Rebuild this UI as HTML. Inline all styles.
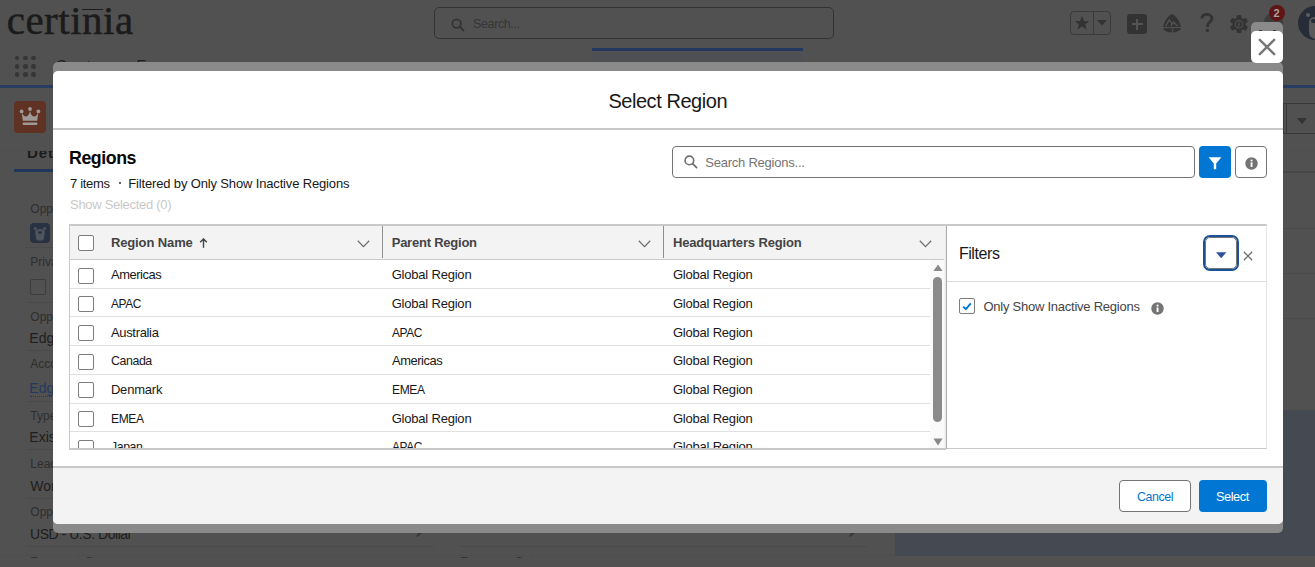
<!DOCTYPE html>
<html><head><meta charset="utf-8"><style>
html,body{margin:0;padding:0;}
body{width:1315px;height:567px;position:relative;overflow:hidden;background:#515151;font-family:"Liberation Sans", sans-serif;}
body div{position:absolute;}
.t{white-space:nowrap;}
</style></head><body>
<div id="logo" class="t" style="left:6.70px;top:0.26px;font-size:41px;line-height:41px;color:#1b1b1b;font-weight:400;letter-spacing:0.511px;font-family:'Liberation Serif', serif;-webkit-text-stroke:0.5px #1b1b1b;">certinia</div>
<div style="left:82px;top:8.5px;width:21px;height:1.2px;background:#1b1b1b"></div>
<div style="left:434px;top:7px;width:399.5px;height:31.5px;border:1px solid #333;border-radius:5px;box-sizing:border-box"></div>
<svg style="position:absolute;left:451px;top:18px" width="14" height="14" viewBox="0 0 14 14"><circle cx="5.6" cy="5.6" r="4.3" fill="none" stroke="#333" stroke-width="1.7"/><line x1="8.7" y1="8.7" x2="12.5" y2="12.5" stroke="#333" stroke-width="1.8" stroke-linecap="round"/></svg>
<div id="hsearch" class="t" style="left:472.60px;top:17.00px;font-size:13px;line-height:13px;color:#363636;font-weight:400;letter-spacing:-0.450px;font-family:'Liberation Sans', sans-serif;transform:scaleX(0.9704);transform-origin:0 0;">Search...</div>
<div style="left:592px;top:48px;width:211px;height:3px;background:#24375c"></div>
<div style="left:592px;top:51px;width:211px;height:11px;background:#4f5053"></div>
<div style="left:1070px;top:11px;width:41px;height:24px;border:1px solid #3a3a3a;border-radius:4px;box-sizing:border-box"></div>
<div style="left:1093px;top:11px;width:1px;height:24px;background:#3a3a3a"></div>
<svg style="position:absolute;left:1074px;top:15px" width="16" height="16" viewBox="0 0 16 16"><polygon points="8,1 10.1,6 15.2,6.1 11.2,9.4 12.6,14.6 8,11.6 3.4,14.6 4.8,9.4 0.8,6.1 5.9,6" fill="#333"/></svg>
<svg style="position:absolute;left:1097px;top:20px" width="10" height="6" viewBox="0 0 10 6"><polygon points="0,0 10,0 5,5.5" fill="#333"/></svg>
<div style="left:1127px;top:14px;width:20px;height:20px;background:#333;border-radius:3px"></div>
<div style="left:1131.5px;top:23px;width:11px;height:2px;background:#545454"></div>
<div style="left:1136px;top:18.5px;width:2px;height:11px;background:#545454"></div>
<svg style="position:absolute;left:1161.5px;top:13.5px" width="20" height="19" viewBox="0 0 20 19"><path d="M10 0.2 Q11.3 0.2 12.6 1.6 Q17.5 6.5 18.8 12.5 Q19.3 15.3 17.4 16.6 Q14.5 18.6 10 18.6 Q5.5 18.6 2.6 16.6 Q0.7 15.3 1.2 12.5 Q2.5 6.5 7.4 1.6 Q8.7 0.2 10 0.2Z" fill="#333"/><path d="M3.6 12.2 L7.3 6 L10.2 10.2 M8.8 12.2 L11.6 8 L15.6 12.2" fill="none" stroke="#545454" stroke-width="1.3"/><path d="M0.8 13.6 L19.2 13.6" stroke="#545454" stroke-width="1"/><path d="M9.6 13.8 L11 15.8 L9.6 18.8" fill="none" stroke="#545454" stroke-width="1"/></svg>
<svg style="position:absolute;left:1200px;top:13px" width="14" height="20" viewBox="0 0 14 20"><path d="M1.9 5.4 C1.9 2.8 4 1.4 6.8 1.4 C9.8 1.4 11.9 3.1 11.9 5.6 C11.9 8.8 7.6 9.2 7.6 12.6 L7.6 14" fill="none" stroke="#333" stroke-width="2.9"/><circle cx="7.4" cy="17.6" r="1.75" fill="#333"/></svg>
<svg style="position:absolute;left:1230px;top:14.5px" width="18" height="18.5" viewBox="0 0 18 18.5"><g fill="#333"><circle cx="9" cy="9.2" r="6.6"/><rect x="6.6" y="0" width="4.8" height="5" rx="1.4" transform="rotate(0 9 9.2)"/><rect x="6.6" y="0" width="4.8" height="5" rx="1.4" transform="rotate(60 9 9.2)"/><rect x="6.6" y="0" width="4.8" height="5" rx="1.4" transform="rotate(120 9 9.2)"/><rect x="6.6" y="0" width="4.8" height="5" rx="1.4" transform="rotate(180 9 9.2)"/><rect x="6.6" y="0" width="4.8" height="5" rx="1.4" transform="rotate(240 9 9.2)"/><rect x="6.6" y="0" width="4.8" height="5" rx="1.4" transform="rotate(300 9 9.2)"/></g><circle cx="9" cy="9.2" r="3.9" fill="none" stroke="#545454" stroke-width="1"/><path d="M9.8 6.6 L7.9 9.6 L9.5 9.6 L8.4 12" fill="none" stroke="#545454" stroke-width="0.9"/></svg>
<div style="left:1264px;top:13px;width:19px;height:18px;border-radius:9px 9px 2px 2px;background:#3d3d3d"></div>
<div style="left:1269px;top:5px;width:16px;height:16px;border-radius:8px;background:#5f1515"></div>
<div class="t" style="left:1273.6px;top:7px;font-size:11px;line-height:12px;color:#a5a5a5;font-weight:700;font-family:'Liberation Sans',sans-serif">2</div>
<div style="left:1298px;top:6px;width:34px;height:34px;border-radius:17px;background:#262d38"></div>
<div style="left:1305.5px;top:13px;width:4px;height:4px;border-radius:2px;background:#5c5c5c"></div>
<div style="left:1309px;top:17px;width:14px;height:22px;border-radius:7px 7px 9px 9px;background:#5a5a5a"></div>
<div style="left:1311px;top:19px;width:8px;height:4px;border-radius:4px;background:#262d38"></div>
<div style="left:14.8px;top:55.7px;width:4.6px;height:4.6px;border-radius:50%;background:#363636"></div>
<div style="left:23.1px;top:55.7px;width:4.6px;height:4.6px;border-radius:50%;background:#363636"></div>
<div style="left:31.4px;top:55.7px;width:4.6px;height:4.6px;border-radius:50%;background:#363636"></div>
<div style="left:14.8px;top:64.0px;width:4.6px;height:4.6px;border-radius:50%;background:#363636"></div>
<div style="left:23.1px;top:64.0px;width:4.6px;height:4.6px;border-radius:50%;background:#363636"></div>
<div style="left:31.4px;top:64.0px;width:4.6px;height:4.6px;border-radius:50%;background:#363636"></div>
<div style="left:14.8px;top:72.3px;width:4.6px;height:4.6px;border-radius:50%;background:#363636"></div>
<div style="left:23.1px;top:72.3px;width:4.6px;height:4.6px;border-radius:50%;background:#363636"></div>
<div style="left:31.4px;top:72.3px;width:4.6px;height:4.6px;border-radius:50%;background:#363636"></div>
<div id="navtxt" class="t" style="left:55.60px;top:59.26px;font-size:16px;line-height:16px;color:#1e1e1e;font-weight:400;letter-spacing:0.000px;font-family:'Liberation Sans', sans-serif;letter-spacing:0.75px;">Customer Fo</div>
<div style="left:0px;top:85px;width:1315px;height:3px;background:#283c60"></div>
<div style="left:14px;top:101px;width:32px;height:32px;background:#5f3224;border-radius:4px"></div>
<svg style="position:absolute;left:18px;top:105px" width="24" height="24" viewBox="0 0 24 24"><g fill="#9e9997"><circle cx="12" cy="4" r="1.9"/><circle cx="3.6" cy="6.4" r="1.9"/><circle cx="20.4" cy="6.4" r="1.9"/><path d="M3.8 8 Q6 12 8.5 11.5 Q11 10.5 12 6 Q13 10.5 15.5 11.5 Q18 12 20.2 8 L19.2 15.8 L4.8 15.8Z"/><rect x="4.6" y="17.6" width="14.8" height="2.4" rx="1"/></g></svg>
<div style="left:1260px;top:103px;width:70px;height:31px;border:1px solid #383838;box-sizing:border-box;border-radius:4px"></div>
<div style="left:1283px;top:103px;width:1px;height:31px;background:#383838"></div>
<div style="left:1286px;top:103px;width:1px;height:31px;background:#383838"></div>
<svg style="position:absolute;left:1297px;top:117.5px" width="10" height="6" viewBox="0 0 10 6"><polygon points="0,0 10,0 5,6" fill="#333"/></svg>
<div style="left:0px;top:150px;width:1315px;height:1px;background:#4e4e4e"></div>
<div style="left:1283px;top:171px;width:32px;height:2px;background:#474747"></div>
<div style="left:1283px;top:228px;width:32px;height:1px;background:#4a4a4a"></div>
<div style="left:1283px;top:273px;width:32px;height:1px;background:#4a4a4a"></div>
<div style="left:1283px;top:318px;width:32px;height:1px;background:#4a4a4a"></div>
<div style="left:0;top:151px;width:53px;height:20px;overflow:hidden;position:absolute"><div class="t" style="left:27px;top:-6.10px;font-size:15px;line-height:15px;color:#1b1b1b;font-weight:700;letter-spacing:0.9px;font-family:'Liberation Sans',sans-serif">Details</div></div>
<div style="left:14px;top:169px;width:40px;height:3px;background:#22365a"></div>
<div id="f1" class="t" style="left:30.30px;top:203.44px;font-size:12px;line-height:12px;color:#2e2e2e;font-weight:400;letter-spacing:0.000px;font-family:'Liberation Sans', sans-serif;">Opportunity Owner</div>
<div style="left:30px;top:223px;width:20px;height:20px;border-radius:4px;background:#293241"></div>
<svg style="position:absolute;left:30px;top:223px" width="20" height="20" viewBox="0 0 20 20"><circle cx="5.3" cy="5.6" r="1.6" fill="#4d535d"/><circle cx="14.7" cy="5.6" r="1.6" fill="#4d535d"/><path d="M5.2 8.5 C5.2 5 14.8 5 14.8 8.5 L14 15.5 C13 18.5 7 18.5 6 15.5Z" fill="#4f5560"/><ellipse cx="10" cy="9.6" rx="2" ry="1.3" fill="#293241"/></svg>
<div style="left:26px;top:247px;width:408px;height:1px;background:#4a4a4a"></div>
<div id="f2" class="t" style="left:30.30px;top:255.84px;font-size:12px;line-height:12px;color:#2e2e2e;font-weight:400;letter-spacing:0.000px;font-family:'Liberation Sans', sans-serif;">Private</div>
<div style="left:30px;top:279px;width:16px;height:16px;border:1px solid #3d3d3d;border-radius:2px;box-sizing:border-box"></div>
<div style="left:26px;top:302px;width:408px;height:1px;background:#4a4a4a"></div>
<div id="f3" class="t" style="left:30.30px;top:310.64px;font-size:12px;line-height:12px;color:#2e2e2e;font-weight:400;letter-spacing:0.000px;font-family:'Liberation Sans', sans-serif;">Opportunity Name</div>
<div id="f4" class="t" style="left:29.30px;top:330.65px;font-size:14px;line-height:14px;color:#1e1e1e;font-weight:400;letter-spacing:0.000px;font-family:'Liberation Sans', sans-serif;">Edge Installation</div>
<div style="left:26px;top:350px;width:408px;height:1px;background:#4a4a4a"></div>
<div id="f5" class="t" style="left:30.30px;top:358.44px;font-size:12px;line-height:12px;color:#2e2e2e;font-weight:400;letter-spacing:0.000px;font-family:'Liberation Sans', sans-serif;">Account Name</div>
<div id="f6" class="t" style="left:29.30px;top:381.05px;font-size:14px;line-height:14px;color:#233a5e;font-weight:400;letter-spacing:0.000px;font-family:'Liberation Sans', sans-serif;">Edge Communications</div>
<div style="left:30px;top:396px;width:60px;height:1px;border-top:1px dotted #233a5e"></div>
<div style="left:26px;top:401px;width:408px;height:1px;background:#4a4a4a"></div>
<div id="f7" class="t" style="left:30.30px;top:409.64px;font-size:12px;line-height:12px;color:#2e2e2e;font-weight:400;letter-spacing:0.000px;font-family:'Liberation Sans', sans-serif;">Type</div>
<div id="f8" class="t" style="left:29.30px;top:429.85px;font-size:14px;line-height:14px;color:#1e1e1e;font-weight:400;letter-spacing:0.000px;font-family:'Liberation Sans', sans-serif;">Existing Customer - Upgrade</div>
<div style="left:26px;top:449px;width:408px;height:1px;background:#4a4a4a"></div>
<div id="f9" class="t" style="left:30.30px;top:457.64px;font-size:12px;line-height:12px;color:#2e2e2e;font-weight:400;letter-spacing:0.000px;font-family:'Liberation Sans', sans-serif;">Lead Source</div>
<div id="f10" class="t" style="left:30.30px;top:478.85px;font-size:14px;line-height:14px;color:#1e1e1e;font-weight:400;letter-spacing:0.000px;font-family:'Liberation Sans', sans-serif;">Word of mouth</div>
<div style="left:26px;top:498px;width:408px;height:1px;background:#4a4a4a"></div>
<div id="f11" class="t" style="left:30.30px;top:506.34px;font-size:12px;line-height:12px;color:#2e2e2e;font-weight:400;letter-spacing:0.000px;font-family:'Liberation Sans', sans-serif;">Opportunity Currency</div>
<div id="f12" class="t" style="left:29.70px;top:526.95px;font-size:14px;line-height:14px;color:#1e1e1e;font-weight:400;letter-spacing:-0.450px;font-family:'Liberation Sans', sans-serif;transform:scaleX(0.9978);transform-origin:0 0;">USD - U.S. Dollar</div>
<div style="left:26px;top:546px;width:408px;height:1px;background:#4a4a4a"></div>
<div style="left:459px;top:546px;width:408px;height:1px;background:#4a4a4a"></div>
<svg style="position:absolute;left:415px;top:529px" width="9" height="9" viewBox="0 0 9 9"><path d="M1 8 L2 5 L6 1 L8 3 L4 7Z" fill="#3a3a3a"/></svg>
<svg style="position:absolute;left:848px;top:529px" width="9" height="9" viewBox="0 0 9 9"><path d="M1 8 L2 5 L6 1 L8 3 L4 7Z" fill="#3a3a3a"/></svg>
<div style="left:895px;top:410px;width:420px;height:146px;background:#454a52"></div>
<div style="left:0px;top:556px;width:1315px;height:11px;background:#515151"></div>
<div style="left:0px;top:555px;width:895px;height:1px;background:#4e4e4e"></div>
<div style="left:0;top:553px;width:895px;height:4.5px;overflow:hidden;position:absolute"><div class="t" style="left:30px;top:2px;font-size:13px;line-height:13px;color:#333;font-family:'Liberation Sans',sans-serif;position:absolute">Forecast Category</div><div class="t" style="left:460px;top:2px;font-size:13px;line-height:13px;color:#333;font-family:'Liberation Sans',sans-serif;position:absolute">Forecast Category</div></div>
<div style="left:53px;top:62px;width:1230px;height:20px;background:#8a8a8a;border-radius:5px 5px 0 0"></div>
<div style="left:53px;top:510px;width:1230px;height:22.5px;background:#8a8a8a;border-radius:0 0 5px 5px"></div>
<div style="left:53px;top:70.6px;width:1230px;height:453px;background:#fff;border-radius:5px;overflow:hidden"></div>
<div style="left:1251px;top:22px;width:32px;height:20px;background:#8a8a8a;border-radius:5px 5px 0 0"></div>
<div style="left:1251px;top:31px;width:32px;height:31.6px;background:#fff;border-radius:5px"></div>
<svg style="position:absolute;left:1258px;top:38px" width="18" height="18" viewBox="0 0 18 18"><path d="M1.8 1.8 L16.2 16.2 M16.2 1.8 L1.8 16.2" stroke="#777" stroke-width="2.4" stroke-linecap="round"/></svg>
<div style="left:1259px;top:29.5px;width:2.5px;height:1.5px;border-radius:1px;background:#333"></div>
<div style="left:1273px;top:29.5px;width:2.5px;height:1.5px;border-radius:1px;background:#333"></div>
<div id="title" class="t" style="left:608.40px;top:91.07px;font-size:20px;line-height:20px;color:#181818;font-weight:400;letter-spacing:-0.450px;font-family:'Liberation Sans', sans-serif;">Select Region</div>
<div style="left:53px;top:128px;width:1230px;height:2px;background:#c9c9c9"></div>
<div id="regions" class="t" style="left:69.00px;top:148.76px;font-size:18px;line-height:18px;color:#080707;font-weight:700;letter-spacing:-0.450px;font-family:'Liberation Sans', sans-serif;transform:scaleX(0.9882);transform-origin:0 0;">Regions</div>
<div id="items" class="t" style="left:70.00px;top:176.60px;font-size:13px;line-height:13px;color:#181818;font-weight:400;letter-spacing:-0.317px;font-family:'Liberation Sans', sans-serif;">7 items</div>
<div style="left:118.5px;top:181.5px;width:2px;height:2px;background:#333;border-radius:1px"></div>
<div id="filtered" class="t" style="left:128.30px;top:176.60px;font-size:13px;line-height:13px;color:#181818;font-weight:400;letter-spacing:-0.154px;font-family:'Liberation Sans', sans-serif;">Filtered by Only Show Inactive Regions</div>
<div id="showsel" class="t" style="left:70.00px;top:197.80px;font-size:13px;line-height:13px;color:#c9c9c9;font-weight:400;letter-spacing:-0.287px;font-family:'Liberation Sans', sans-serif;">Show Selected (0)</div>
<div style="left:672px;top:146px;width:523px;height:32px;border:1px solid #747474;border-radius:4px;box-sizing:border-box;background:#fff"></div>
<svg style="position:absolute;left:684px;top:155px" width="14" height="14" viewBox="0 0 14 14"><circle cx="5.4" cy="5.4" r="4.3" fill="none" stroke="#706e6b" stroke-width="1.6"/><line x1="8.6" y1="8.6" x2="12.6" y2="12.6" stroke="#706e6b" stroke-width="1.7" stroke-linecap="round"/></svg>
<div id="srch" class="t" style="left:705.30px;top:155.60px;font-size:13px;line-height:13px;color:#747474;font-weight:400;letter-spacing:-0.233px;font-family:'Liberation Sans', sans-serif;">Search Regions...</div>
<div style="left:1199px;top:146px;width:32px;height:32px;background:#0176d3;border-radius:4px"></div>
<svg style="position:absolute;left:1208px;top:157px" width="14" height="13" viewBox="0 0 14 13"><path d="M0.6 0.2 L13.4 0.2 L8.2 6.6 L8.2 12.2 L5.8 12.2 L5.8 6.6Z" fill="#fff"/></svg>
<div style="left:1235px;top:146px;width:32px;height:32px;border:1px solid #747474;border-radius:4px;box-sizing:border-box;background:#fff"></div>
<svg style="position:absolute;left:1244.5px;top:156.5px" width="13" height="13" viewBox="0 0 13 13"><circle cx="6.5" cy="6.5" r="6.2" fill="#747474"/><rect x="5.6" y="5.4" width="1.9" height="4.6" fill="#fff"/><circle cx="6.55" cy="3.6" r="1.05" fill="#fff"/></svg>
<div style="left:69px;top:224px;width:877px;height:226px;border:1px solid #c9c9c9;border-top:2px solid #c9c9c9;border-bottom:2px solid #c9c9c9;box-sizing:border-box;background:#fff"></div>
<div style="left:70px;top:226px;width:874px;height:33px;background:#f3f3f3"></div>
<div style="left:70px;top:259px;width:874px;height:1px;background:#c9c9c9"></div>
<div style="left:382px;top:226px;width:1px;height:32px;background:#8f8f8f"></div>
<div style="left:663px;top:226px;width:1px;height:32px;background:#8f8f8f"></div>
<div style="left:944px;top:226px;width:2px;height:222px;background:linear-gradient(90deg,#f8f8f8,#e6e6e6)"></div>
<div style="left:944px;top:224px;width:2px;height:2px;background:#c9c9c9"></div>
<svg style="position:absolute;left:357px;top:240px" width="13" height="8" viewBox="0 0 13 8"><path d="M0.8 0.8 L6.5 6.6 L12.2 0.8" fill="none" stroke="#706e6b" stroke-width="1.3"/></svg>
<svg style="position:absolute;left:638px;top:240px" width="13" height="8" viewBox="0 0 13 8"><path d="M0.8 0.8 L6.5 6.6 L12.2 0.8" fill="none" stroke="#706e6b" stroke-width="1.3"/></svg>
<svg style="position:absolute;left:919px;top:240px" width="13" height="8" viewBox="0 0 13 8"><path d="M0.8 0.8 L6.5 6.6 L12.2 0.8" fill="none" stroke="#706e6b" stroke-width="1.3"/></svg>
<div style="left:78px;top:235px;width:16px;height:16px;border:1px solid #7d7d7d;border-radius:2px;box-sizing:border-box;background:#fff"></div>
<div id="h1" class="t" style="left:110.90px;top:235.80px;font-size:13px;line-height:13px;color:#444444;font-weight:700;letter-spacing:-0.114px;font-family:'Liberation Sans', sans-serif;">Region Name</div>
<svg style="position:absolute;left:198.5px;top:237.5px" width="9" height="10" viewBox="0 0 9 10"><path d="M4.5 1 L4.5 9.8 M1.2 4.2 L4.5 0.9 L7.8 4.2" fill="none" stroke="#444" stroke-width="1.4"/></svg>
<div id="h2" class="t" style="left:391.70px;top:235.80px;font-size:13px;line-height:13px;color:#444444;font-weight:700;letter-spacing:-0.232px;font-family:'Liberation Sans', sans-serif;">Parent Region</div>
<div id="h3" class="t" style="left:672.90px;top:235.80px;font-size:13px;line-height:13px;color:#444444;font-weight:700;letter-spacing:-0.146px;font-family:'Liberation Sans', sans-serif;">Headquarters Region</div>
<div style="left:70px;top:260px;width:874px;height:188px;overflow:hidden">
<div style="left:0;top:28px;width:860px;height:1px;background:#e0e0e0"></div>
<div style="left:8px;top:7.60px;width:16px;height:16px;border:1px solid #7d7d7d;border-radius:2px;box-sizing:border-box"></div>
<div id="r0a" class="t" style="left:40.90px;top:8.10px;font-size:13px;line-height:13px;color:#181818;letter-spacing:-0.450px;transform:scaleX(0.9936);transform-origin:0 0;">Americas</div>
<div id="r0b" class="t" style="left:321.70px;top:8.10px;font-size:13px;line-height:13px;color:#181818;letter-spacing:-0.205px;">Global Region</div>
<div id="r0c" class="t" style="left:602.90px;top:8.10px;font-size:13px;line-height:13px;color:#181818;letter-spacing:-0.205px;">Global Region</div>
<div style="left:0;top:56px;width:860px;height:1px;background:#e0e0e0"></div>
<div style="left:8px;top:36.32px;width:16px;height:16px;border:1px solid #7d7d7d;border-radius:2px;box-sizing:border-box"></div>
<div id="r1a" class="t" style="left:40.90px;top:36.82px;font-size:13px;line-height:13px;color:#181818;letter-spacing:-0.450px;transform:scaleX(0.9175);transform-origin:0 0;">APAC</div>
<div id="r1b" class="t" style="left:321.70px;top:36.82px;font-size:13px;line-height:13px;color:#181818;letter-spacing:-0.205px;">Global Region</div>
<div id="r1c" class="t" style="left:602.90px;top:36.82px;font-size:13px;line-height:13px;color:#181818;letter-spacing:-0.205px;">Global Region</div>
<div style="left:0;top:85px;width:860px;height:1px;background:#e0e0e0"></div>
<div style="left:8px;top:65.04px;width:16px;height:16px;border:1px solid #7d7d7d;border-radius:2px;box-sizing:border-box"></div>
<div id="r2a" class="t" style="left:40.90px;top:65.54px;font-size:13px;line-height:13px;color:#181818;letter-spacing:-0.319px;">Australia</div>
<div id="r2b" class="t" style="left:321.70px;top:65.54px;font-size:13px;line-height:13px;color:#181818;letter-spacing:-0.450px;transform:scaleX(0.9175);transform-origin:0 0;">APAC</div>
<div id="r2c" class="t" style="left:602.90px;top:65.54px;font-size:13px;line-height:13px;color:#181818;letter-spacing:-0.205px;">Global Region</div>
<div style="left:0;top:114px;width:860px;height:1px;background:#e0e0e0"></div>
<div style="left:8px;top:93.76px;width:16px;height:16px;border:1px solid #7d7d7d;border-radius:2px;box-sizing:border-box"></div>
<div id="r3a" class="t" style="left:40.90px;top:94.26px;font-size:13px;line-height:13px;color:#181818;letter-spacing:-0.450px;transform:scaleX(0.9533);transform-origin:0 0;">Canada</div>
<div id="r3b" class="t" style="left:321.70px;top:94.26px;font-size:13px;line-height:13px;color:#181818;letter-spacing:-0.450px;transform:scaleX(0.9936);transform-origin:0 0;">Americas</div>
<div id="r3c" class="t" style="left:602.90px;top:94.26px;font-size:13px;line-height:13px;color:#181818;letter-spacing:-0.205px;">Global Region</div>
<div style="left:0;top:143px;width:860px;height:1px;background:#e0e0e0"></div>
<div style="left:8px;top:122.48px;width:16px;height:16px;border:1px solid #7d7d7d;border-radius:2px;box-sizing:border-box"></div>
<div id="r4a" class="t" style="left:40.90px;top:122.98px;font-size:13px;line-height:13px;color:#181818;letter-spacing:-0.189px;">Denmark</div>
<div id="r4b" class="t" style="left:321.70px;top:122.98px;font-size:13px;line-height:13px;color:#181818;letter-spacing:-0.450px;transform:scaleX(0.9276);transform-origin:0 0;">EMEA</div>
<div id="r4c" class="t" style="left:602.90px;top:122.98px;font-size:13px;line-height:13px;color:#181818;letter-spacing:-0.205px;">Global Region</div>
<div style="left:0;top:171px;width:860px;height:1px;background:#e0e0e0"></div>
<div style="left:8px;top:151.20px;width:16px;height:16px;border:1px solid #7d7d7d;border-radius:2px;box-sizing:border-box"></div>
<div id="r5a" class="t" style="left:40.90px;top:151.70px;font-size:13px;line-height:13px;color:#181818;letter-spacing:-0.450px;transform:scaleX(0.9276);transform-origin:0 0;">EMEA</div>
<div id="r5b" class="t" style="left:321.70px;top:151.70px;font-size:13px;line-height:13px;color:#181818;letter-spacing:-0.205px;">Global Region</div>
<div id="r5c" class="t" style="left:602.90px;top:151.70px;font-size:13px;line-height:13px;color:#181818;letter-spacing:-0.205px;">Global Region</div>

<div style="left:8px;top:179.92px;width:16px;height:16px;border:1px solid #7d7d7d;border-radius:2px;box-sizing:border-box"></div>
<div id="r6a" class="t" style="left:40.90px;top:180.42px;font-size:13px;line-height:13px;color:#181818;letter-spacing:-0.450px;transform:scaleX(0.9464);transform-origin:0 0;">Japan</div>
<div id="r6b" class="t" style="left:321.70px;top:180.42px;font-size:13px;line-height:13px;color:#181818;letter-spacing:-0.450px;transform:scaleX(0.9175);transform-origin:0 0;">APAC</div>
<div id="r6c" class="t" style="left:602.90px;top:180.42px;font-size:13px;line-height:13px;color:#181818;letter-spacing:-0.205px;">Global Region</div>
</div>
<div style="left:930px;top:260px;width:14px;height:188px;background:#fafafa"></div>
<svg style="position:absolute;left:932.5px;top:263.5px" width="10" height="8" viewBox="0 0 10 8"><polygon points="5,0.5 9.6,7 0.4,7" fill="#8a8a8a"/></svg>
<div style="left:933px;top:277px;width:9px;height:145px;background:#8a8a8a;border-radius:4.5px"></div>
<svg style="position:absolute;left:932.5px;top:437.5px" width="10" height="8" viewBox="0 0 10 8"><polygon points="0.4,0.5 9.6,0.5 5,7.5" fill="#8a8a8a"/></svg>
<div style="left:946px;top:224px;width:321px;height:225px;border-top:2px solid #c9c9c9;border-right:1px solid #e5e5e5;border-bottom:1px solid #c9c9c9;box-sizing:border-box;background:#fff"></div>
<div style="left:946px;top:226px;width:1px;height:223px;background:#ababab"></div>
<div id="filters" class="t" style="left:958.90px;top:246.06px;font-size:16px;line-height:16px;color:#181818;font-weight:400;letter-spacing:-0.426px;font-family:'Liberation Sans', sans-serif;">Filters</div>
<div style="left:1203px;top:235px;width:36px;height:36px;border:2.3px solid #1b5297;border-radius:7px;box-sizing:border-box"></div>
<div style="left:1205.3px;top:237.3px;width:31.4px;height:31.4px;border:1px solid #747474;border-radius:5px;box-sizing:border-box"></div>
<svg style="position:absolute;left:1216px;top:251.5px" width="10.5" height="6.5" viewBox="0 0 10.5 6.5"><polygon points="0,0.2 10.4,0.2 5.2,6.3" fill="#2e509c"/></svg>
<svg style="position:absolute;left:1243px;top:251px" width="10" height="10" viewBox="0 0 10 10"><path d="M0.8 0.8 L9.2 9.2 M9.2 0.8 L0.8 9.2" stroke="#706e6b" stroke-width="1.3"/></svg>
<div style="left:947px;top:281px;width:320px;height:1px;background:#dddbda"></div>
<div style="left:959px;top:298px;width:16px;height:16px;border:1px solid #7d7d7d;border-radius:2px;box-sizing:border-box;background:#fff"></div>
<svg style="position:absolute;left:962px;top:302px" width="10" height="9" viewBox="0 0 10 9"><path d="M1.2 4.6 L3.9 7.2 L8.8 1.4" fill="none" stroke="#0176d3" stroke-width="1.9"/></svg>
<div id="only" class="t" style="left:983.50px;top:299.90px;font-size:13px;line-height:13px;color:#444444;font-weight:400;letter-spacing:-0.247px;font-family:'Liberation Sans', sans-serif;">Only Show Inactive Regions</div>
<svg style="position:absolute;left:1150.7px;top:301.7px" width="13" height="13" viewBox="0 0 13 13"><circle cx="6.5" cy="6.5" r="6.2" fill="#747474"/><rect x="5.6" y="5.4" width="1.9" height="4.6" fill="#fff"/><circle cx="6.55" cy="3.6" r="1.05" fill="#fff"/></svg>
<div style="left:53px;top:466px;width:1230px;height:2px;background:#c9c9c9"></div>
<div style="left:53px;top:468px;width:1230px;height:55.5px;background:#f3f3f3;border-radius:0 0 5px 5px"></div>
<div style="left:1119px;top:480px;width:72px;height:32px;border:1px solid #747474;border-radius:4px;box-sizing:border-box;background:#fff"></div>
<div id="cancel" class="t" style="left:1136.70px;top:489.80px;font-size:13px;line-height:13px;color:#0176d3;font-weight:400;letter-spacing:-0.450px;font-family:'Liberation Sans', sans-serif;transform:scaleX(0.9523);transform-origin:0 0;">Cancel</div>
<div style="left:1199px;top:480px;width:68px;height:32px;background:#0176d3;border-radius:4px"></div>
<div id="select" class="t" style="left:1216.00px;top:489.80px;font-size:13px;line-height:13px;color:#ffffff;font-weight:400;letter-spacing:-0.450px;font-family:'Liberation Sans', sans-serif;transform:scaleX(0.9805);transform-origin:0 0;">Select</div>
</body></html>
